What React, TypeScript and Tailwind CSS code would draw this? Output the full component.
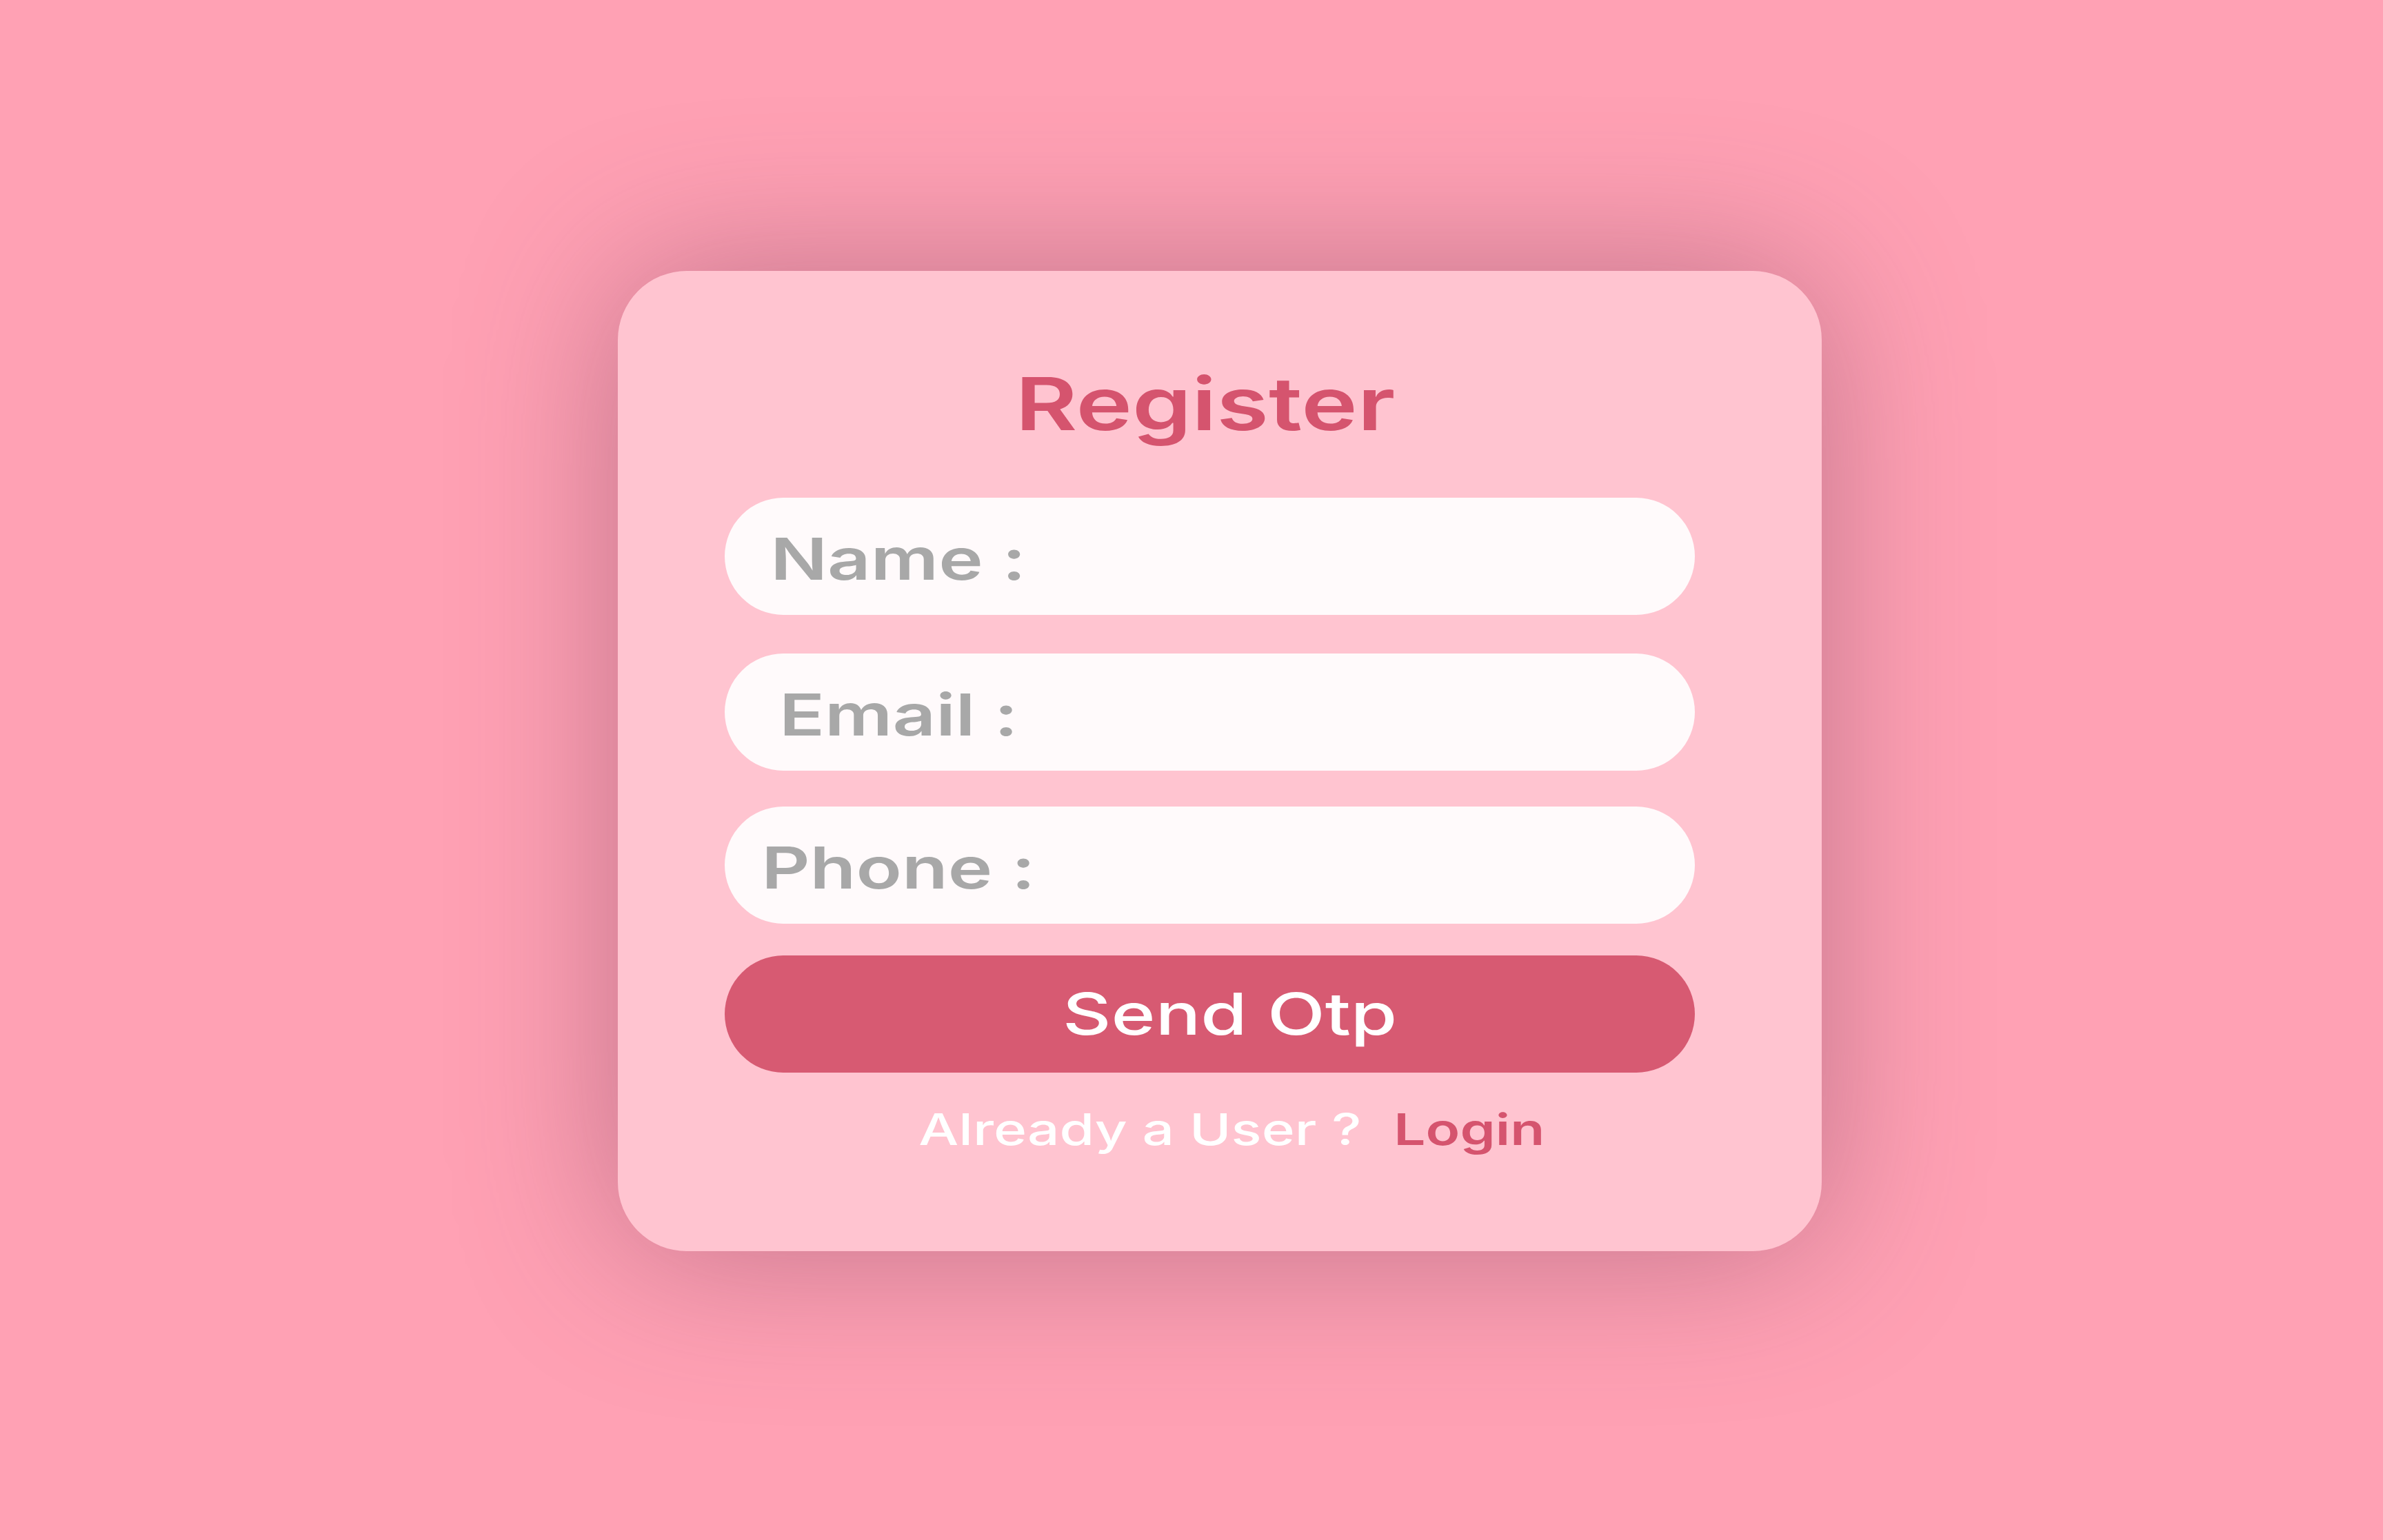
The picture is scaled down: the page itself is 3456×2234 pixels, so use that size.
import React from "react";

function Field({ label }: { label: string }) {
  return (
    <div className="h-[170px] w-full rounded-full bg-[#fffafb] flex items-center">
      <div className="w-[504px] text-center pt-[8px]">
        <span className="inline-block origin-center scale-x-[1.3] text-[84px] leading-none font-semibold text-[#a8a8a8]">
          {label}
        </span>
      </div>
    </div>
  );
}

export default function App() {
  return (
    <div className="min-h-screen w-full bg-[#ffa1b4] flex items-center justify-center font-['Inter','Liberation_Sans',sans-serif]">
      <div className="ml-[82px] mb-[27px] w-[1746px] rounded-[100px] bg-[#ffc4d0] shadow-[0_0_230px_0_rgba(120,60,90,0.46)] pt-[140px] pb-[145px] pl-[155px] pr-[184px] flex flex-col">
        <div className="text-center pr-[13px]">
          <span className="inline-block origin-center scale-x-[1.3] text-[106px] leading-none font-semibold text-[#d5546e]">
            Register
          </span>
        </div>
        <div className="mt-[83px] flex flex-col">
          <Field label="Name :" />
          <div className="mt-[56px]">
            <Field label="Email :" />
          </div>
          <div className="mt-[52px]">
            <Field label="Phone :" />
          </div>
          <button className="mt-[46px] h-[170px] w-full rounded-full bg-[#d75a72] flex items-center justify-center pl-[58px]">
            <span className="inline-block origin-center scale-x-[1.3] text-[84px] leading-none font-medium text-white">
              Send Otp
            </span>
          </button>
        </div>
        <div className="mt-[51px] text-center pl-[63px]">
          <span className="inline-block origin-center scale-x-[1.3] text-[63px] leading-none font-medium text-white whitespace-nowrap">
            Already a User ?
            <span className="ml-[36px] font-semibold text-[#d5546e]">Login</span>
          </span>
        </div>
      </div>
    </div>
  );
}
